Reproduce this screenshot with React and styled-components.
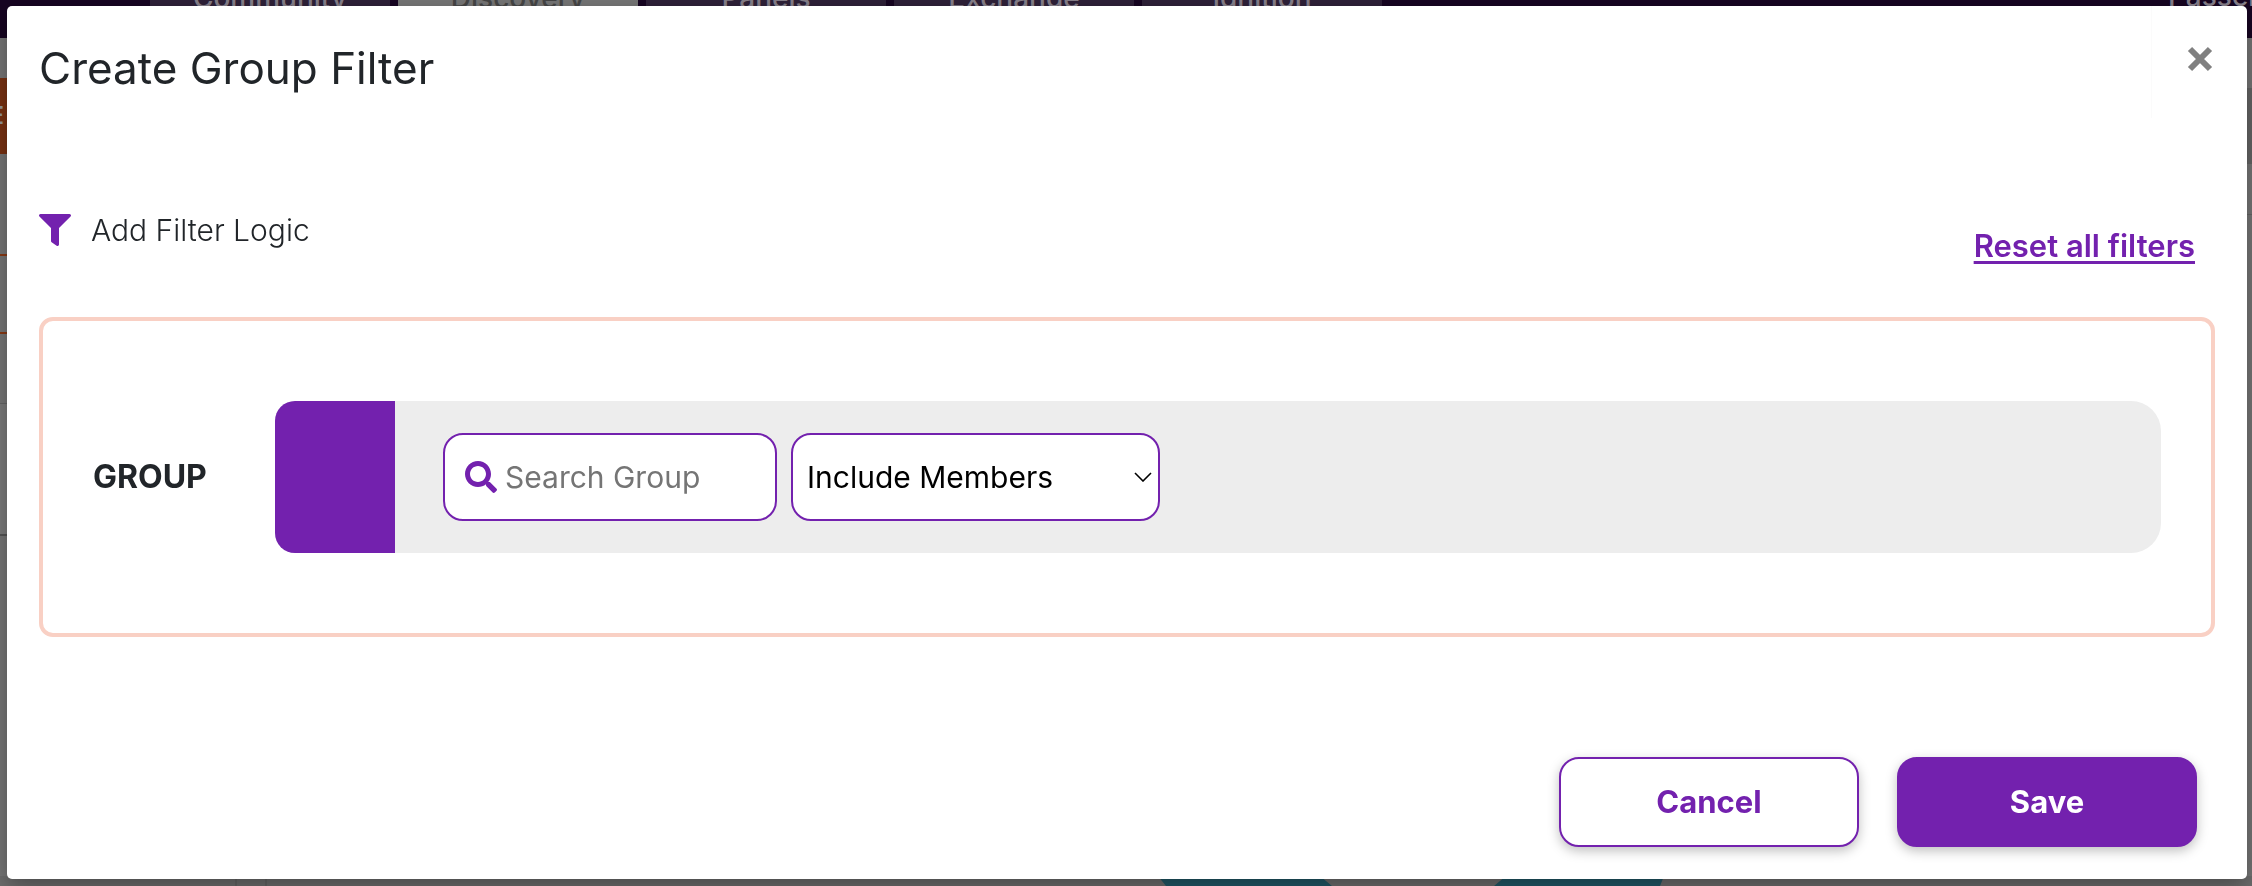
import React, { useState } from "react"
import styled, { createGlobalStyle } from "styled-components"
import { FaFilter, FaSearch } from "react-icons/fa"

const GlobalStyle = createGlobalStyle`
  :root {
    --purple: #7321ae;
    --text: #212529;
    --peach: #f9d0c4;
    --panel: #ededed;
  }

  *, *::before, *::after {
    box-sizing: border-box;
  }

  body {
    margin: 0;
    background: #777;
    color: var(--text);
    font-family: Inter, "Liberation Sans", sans-serif;
    font-size: 30px;
    line-height: 48px;
  }

  button, input, select {
    font: inherit;
  }
`

/* ---- dimmed page behind the dialog ---- */

const Page = styled.div`
  height: 100vh;
  overflow: hidden;
  display: flex;
  flex-direction: column;
  justify-content: flex-end;
`

const TopBar = styled.header`
  height: 38px;
  flex: none;
  display: flex;
  align-items: flex-end;
  justify-content: space-between;
  padding: 0 0 0 150px;
  background: #170522;
`

const Tabs = styled.nav`
  display: flex;
  gap: 8px;
`

const Tab = styled.a`
  width: 240px;
  height: 80px;
  padding-bottom: 26px;
  text-align: center;
  font-size: 28px;
  font-weight: 500;
  line-height: 28px;
  text-decoration: none;
  display: flex;
  align-items: flex-end;
  justify-content: center;
  color: ${({ $active }) => ($active ? "#464646" : "#88818c")};
  background: ${({ $active }) => ($active ? "#777" : "#2f2139")};
`

const Account = styled.span`
  width: 84px;
  height: 80px;
  padding-bottom: 28px;
  display: flex;
  align-items: flex-end;
  overflow: hidden;
  font-size: 28px;
  font-weight: 500;
  line-height: 28px;
  color: #88818c;
`

const Body = styled.div`
  flex: 1;
  display: flex;
  justify-content: space-between;
`

const Gutter = styled.div`
  width: 10px;
  display: flex;
  flex-direction: column;
`

const Band = styled.div`
  height: ${({ $height }) => $height}px;
  background: ${({ $color }) => $color || "transparent"};
`

const SideLabel = styled.div`
  height: 76px;
  display: flex;
  align-items: center;
  justify-content: flex-end;
  padding-right: 6px;
  overflow: hidden;
  background: #7a3212;
  color: #999;
  font-size: 24px;
  font-weight: 600;
`

const Shapes = styled.svg`
  display: block;
  flex: none;
  width: 100%;
  height: 10px;
  background: #6e6e6e;
`

/* ---- dialog ---- */

const Overlay = styled.div`
  position: fixed;
  inset: 0;
  padding: 6px 5px 7px 7px;
  overflow: auto;
`

const Dialog = styled.section`
  display: flex;
  flex-direction: column;
  min-height: 100%;
  border-radius: 5px;
  background: #fff;
  box-shadow: 0 8px 24px rgba(0, 0, 0, 0.35);
`

const DialogHeader = styled.header`
  display: flex;
  align-items: flex-start;
  justify-content: space-between;
  padding-left: 32px;
`

const Title = styled.h1`
  margin: 32px 0 0;
  font-size: 44px;
  font-weight: 400;
  line-height: 60px;
`

const CloseButton = styled.button`
  width: 96px;
  height: 112px;
  padding: 0 0 6px;
  border: 0;
  border-left: 1px solid #fbfbfb;
  background: none;
  color: #808080;
  cursor: pointer;

  svg {
    display: block;
    margin: 0 auto;
  }
`

const FilterBar = styled.div`
  display: flex;
  align-items: flex-start;
  justify-content: space-between;
  padding: 88px 52px 0 32px;
`

const FilterTitle = styled.h2`
  display: flex;
  align-items: center;
  gap: 20px;
  margin: 0;
  font-size: 30px;
  font-weight: 300;

  svg {
    color: var(--purple);
  }
`

const ResetLink = styled.a`
  margin-top: 16px;
  color: var(--purple);
  font-size: 31px;
  font-weight: 600;
  text-decoration: underline;
  text-decoration-thickness: 3px;
  text-underline-offset: 4px;
`

const GroupBox = styled.div`
  display: flex;
  align-items: center;
  margin: 47px 32px 0;
  padding: 80px 50px;
  border: 4px solid var(--peach);
  border-radius: 14px;
`

const GroupLabel = styled.span`
  width: 182px;
  flex: none;
  font-size: 32px;
  font-weight: 700;
`

const GroupRow = styled.div`
  flex: 1;
  display: flex;
  align-items: center;
  height: 152px;
  border-radius: 20px 30px 30px 20px;
  overflow: hidden;
  background: var(--panel);
`

const Handle = styled.div`
  width: 120px;
  align-self: stretch;
  margin-right: 48px;
  background: var(--purple);
`

const Field = styled.label`
  display: flex;
  align-items: center;
  width: ${({ $width }) => $width}px;
  height: 88px;
  margin-right: 14px;
  border: 2px solid var(--purple);
  border-radius: 20px;
  background: #fff;
`

const SearchField = styled(Field)`
  gap: 8px;
  padding: 0 20px;

  svg {
    flex: none;
    color: var(--purple);
  }
`

const SearchInput = styled.input`
  flex: 1;
  min-width: 0;
  padding: 0;
  border: 0;
  outline: 0;
  background: none;

  &::placeholder {
    color: #757575;
    opacity: 1;
  }
`

const SelectField = styled(Field)`
  padding: 0 6px 0 14px;
`

const Select = styled.select`
  flex: 1;
  min-width: 0;
  padding: 0;
  border: 0;
  outline: 0;
  appearance: none;
  background: none;
  color: #000;
`

const Footer = styled.footer`
  display: flex;
  justify-content: flex-end;
  gap: 38px;
  margin-top: auto;
  padding: 80px 50px 32px;
`

const Button = styled.button`
  width: 300px;
  height: 90px;
  border: 2px solid var(--purple);
  border-radius: 20px;
  background: ${({ $primary }) => ($primary ? "var(--purple)" : "#fff")};
  color: ${({ $primary }) => ($primary ? "#fff" : "var(--purple)")};
  font-size: 31px;
  font-weight: 700;
  box-shadow: 0 4px 12px rgba(0, 0, 0, 0.25);
  cursor: pointer;
`

const TABS = ["Community", "Discovery", "Panels", "Exchange", "Ignition"]

const Background = () => (
  <Page aria-hidden="true">
    <TopBar>
      <Tabs>
        {TABS.map((tab) => (
          <Tab key={tab} href="#" $active={tab === "Discovery"}>{tab}</Tab>
        ))}
      </Tabs>
      <Account>Passenger</Account>
    </TopBar>
    <Body>
      <Gutter>
        <Band $height={40} />
        <SideLabel>E</SideLabel>
        <Band $height={100} />
        <Band $height={2} $color="#8a3a14" />
        <Band $height={76} />
        <Band $height={2} $color="#8a3a14" />
        <Band $height={69} />
        <Band $height={1} $color="#666" />
        <Band $height={130} $color="#7c7c7c" />
        <Band $height={2} $color="#555" />
      </Gutter>
      <Gutter>
        <Band $height={50} />
        <Band $height={76} $color="#666" />
        <Band $height={50} />
        <Band $height={1} $color="#666" />
      </Gutter>
    </Body>
    <Shapes>
      <path d="M1158 0H1320L1332 10H1166Z M1506 0H1664L1660 10H1494Z" fill="#215968" />
      <path d="M236 0V10M266 0V10" stroke="#5c5c5c" />
    </Shapes>
  </Page>
)

const App = () => {
  const [query, setQuery] = useState("")
  const [mode, setMode] = useState("include")

  return (
    <>
      <GlobalStyle />
      <Background />
      <Overlay>
        <Dialog role="dialog" aria-modal="true" aria-labelledby="dialog-title">
          <DialogHeader>
            <Title id="dialog-title">Create Group Filter</Title>
            <CloseButton type="button" aria-label="Close">
              <svg width="26" height="26" viewBox="0 0 26 26">
                <path d="M3 3L23 23M23 3L3 23" stroke="currentColor" strokeWidth="6" />
              </svg>
            </CloseButton>
          </DialogHeader>

          <FilterBar>
            <FilterTitle>
              <FaFilter size={32} />
              Add Filter Logic
            </FilterTitle>
            <ResetLink href="#">Reset all filters</ResetLink>
          </FilterBar>

          <GroupBox>
            <GroupLabel>GROUP</GroupLabel>
            <GroupRow>
              <Handle />
              <SearchField $width={334}>
                <FaSearch size={32} />
                <SearchInput
                  type="text"
                  aria-label="Search Group"
                  placeholder="Search Group"
                  value={query}
                  onChange={(e) => setQuery(e.target.value)}
                />
              </SearchField>
              <SelectField $width={369}>
                <Select
                  aria-label="Members"
                  value={mode}
                  onChange={(e) => setMode(e.target.value)}
                >
                  <option value="include">Include Members</option>
                  <option value="exclude">Exclude Members</option>
                </Select>
                <svg width="18" height="10" viewBox="0 0 18 10" fill="none">
                  <path d="M1 1L9 9L17 1" stroke="#000" strokeWidth="1.6" />
                </svg>
              </SelectField>
            </GroupRow>
          </GroupBox>

          <Footer>
            <Button type="button">Cancel</Button>
            <Button type="button" $primary>Save</Button>
          </Footer>
        </Dialog>
      </Overlay>
    </>
  )
}

export default App
